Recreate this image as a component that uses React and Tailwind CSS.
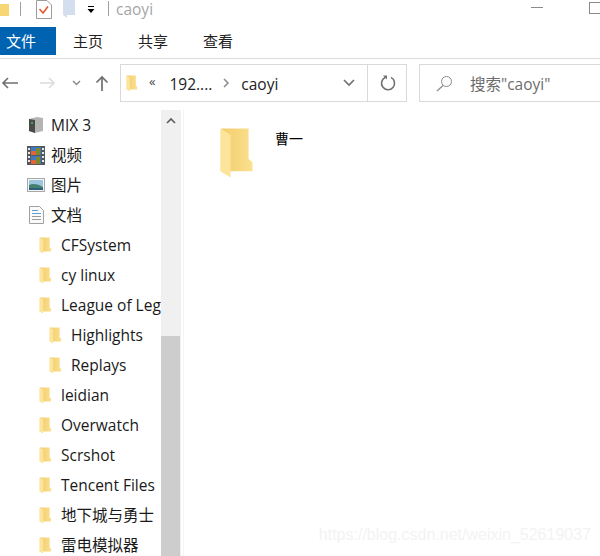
import React from "react";

const FONT = '"Open Sans", "Noto Sans CJK SC", sans-serif';

function Folder({ w = 13, h = 17, id = "f" }) {
  return (
    <svg width={w} height={h} viewBox="0 0 14 17" preserveAspectRatio="none" className="shrink-0 block">
      <defs>
        <linearGradient id={id} x1="0" y1="0" x2="1" y2="0">
          <stop offset="0" stopColor="#f2cd6c" />
          <stop offset="1" stopColor="#fbe08f" />
        </linearGradient>
      </defs>
      <path d="M1 0.5H11.5V10.5L13 11.5V14.5H1Z" fill={`url(#${id})`} />
      <path d="M0.5 0.5L4.5 2.5V16.5L0.5 14.5Z" fill="#fde49b" />
    </svg>
  );
}

function Row({ children, icon, indent = "pl-[39px]", gap = "gap-[10px]" }) {
  return (
    <div className={`h-[30px] flex items-center whitespace-nowrap overflow-hidden ${indent} ${gap}`}>
      {icon}
      <span className="text-[15.5px] leading-[22px] text-[#1a1a1a]">{children}</span>
    </div>
  );
}

const Drive = () => (
  <svg width="16" height="18" viewBox="0 0 16 18" className="shrink-0 block">
    <path d="M1 3L9 1L15 2V15L7 17L1 15Z" fill="#b4b4b4" />
    <path d="M1 3L7 4V17L1 15Z" fill="#4a4a4a" />
    <rect x="3" y="6" width="2" height="2" fill="#34b04a" />
  </svg>
);
const Film = () => (
  <svg width="18" height="19" viewBox="0 0 18 19" className="shrink-0 block">
    <rect width="18" height="19" fill="#55585c" />
    <rect x="4" y="1" width="10" height="8" fill="#3f78c4" />
    <rect x="4" y="10" width="10" height="8" fill="#3f78c4" />
    <rect x="4" y="5" width="5" height="4" fill="#e2653a" />
    <rect x="9" y="2" width="4" height="7" fill="#7c8a2c" />
    <rect x="4" y="14" width="5" height="4" fill="#e2653a" />
    <rect x="9" y="11" width="4" height="7" fill="#7c8a2c" />
    <g fill="#e8e8e8">
      <rect x="1" y="2" width="2" height="2" />
      <rect x="1" y="6" width="2" height="2" />
      <rect x="1" y="10" width="2" height="2" />
      <rect x="1" y="14" width="2" height="2" />
      <rect x="15" y="2" width="2" height="2" />
      <rect x="15" y="6" width="2" height="2" />
      <rect x="15" y="10" width="2" height="2" />
      <rect x="15" y="14" width="2" height="2" />
    </g>
  </svg>
);
const Pic = () => (
  <svg width="18" height="14" viewBox="0 0 18 14" className="shrink-0 block">
    <rect x="0.5" y="0.5" width="17" height="13" fill="#f4f4f4" stroke="#a8a8a8" />
    <rect x="2" y="2" width="14" height="10" fill="#9cc6de" />
    <path d="M2 7C6 5 11 6 16 9V12H2Z" fill="#44806f" />
    <rect x="2" y="10" width="14" height="2" fill="#2d5f7a" />
  </svg>
);
const Doc = () => (
  <svg width="15" height="18" viewBox="0 0 15 18" className="shrink-0 block">
    <path d="M0.5 0.5H10.5L14.5 4.5V17.5H0.5Z" fill="#fafafa" stroke="#a0a0a0" />
    <g stroke="#5aa0d8">
      <path d="M3 4.5H9" />
      <path d="M3 7.5H12" />
    </g>
    <g stroke="#9a9a9a">
      <path d="M3 10.5H12" />
      <path d="M3 13.5H12" />
    </g>
  </svg>
);

export default function App() {
  const f = (name, i, sub) => (
    <Row
      key={name}
      indent={sub ? "pl-[49px]" : "pl-[39px]"}
      gap="gap-[9px]"
      icon={<Folder id={`side${i}`} />}
    >
      {name}
    </Row>
  );
  return (
    <div className="relative w-[600px] h-[556px] bg-white overflow-hidden" style={{ fontFamily: FONT }}>
      {/* title bar */}
      <div className="h-[27px] flex items-start relative">
        <div className="w-[9px] h-[12px] bg-[#f8d676] mt-[4px]" />
        <div className="w-px h-[14px] bg-[#a0a0a0] ml-[11px] mt-[2px]" />
        <svg width="16" height="19" viewBox="0 0 16 19" className="ml-[15px] block">
          <path d="M0.5 0.5H11L15.5 5V18.5H0.5Z" fill="#fff" stroke="#9c9c9c" />
          <path d="M3.5 9L7 13L12 6.5" fill="none" stroke="#e4572e" strokeWidth="1.6" />
        </svg>
        <svg width="13" height="18" viewBox="0 0 13 18" className="ml-[11px] block">
          <path d="M0 0H12V14L13 15H4V18L0 15Z" fill="#d3dfee" />
        </svg>
        <svg width="8" height="8" viewBox="0 0 8 8" className="ml-[11px] mt-[6px] block">
          <rect x="1" y="0" width="6" height="1" fill="#000" />
          <path d="M0.5 3H7.5L4 7Z" fill="#000" />
        </svg>
        <div className="w-px h-[15px] bg-[#a0a0a0] ml-[13px] mt-[1px]" />
        <span className="ml-[7px] text-[15.5px] leading-[19px] text-[#a5a5a5]">caoyi</span>
        <div className="absolute left-[531px] top-[7px] w-[12px] h-px bg-[#8a8a8a]" />
        <div className="absolute left-[589px] top-[2px] w-[14px] h-[12px] border border-[#8a8a8a]" />
      </div>

      {/* tabs */}
      <div className="h-[32px] border-b border-[#dcdcdc] flex items-start text-[15px]">
        <div className="w-[56px] h-[28px] bg-[#0063b1] text-white flex items-center pl-[6px]">文件</div>
        <div className="h-[28px] flex items-center ml-[17px] text-[#222]">主页</div>
        <div className="h-[28px] flex items-center ml-[35px] text-[#222]">共享</div>
        <div className="h-[28px] flex items-center ml-[35px] text-[#222]">查看</div>
      </div>

      {/* address bar */}
      <div className="h-[51px] flex items-start pt-[5px]">
        <div className="w-[120px] shrink-0 h-[38px] flex items-center">
          <svg width="18" height="14" viewBox="0 0 18 14" className="ml-[1px] block">
            <path d="M17 7H2M7 2L2 7L7 12" fill="none" stroke="#6f6f6f" strokeWidth="1.6" />
          </svg>
          <svg width="16" height="14" viewBox="0 0 16 14" className="ml-[21px] block">
            <path d="M0 7H14M9 2L14 7L9 12" fill="none" stroke="#dcdcdc" strokeWidth="1.6" />
          </svg>
          <svg width="9" height="6" viewBox="0 0 9 6" className="ml-[16px] block">
            <path d="M1 1L4.5 4.5L8 1" fill="none" stroke="#8a8a8a" strokeWidth="1.5" />
          </svg>
          <svg width="14" height="16" viewBox="0 0 14 16" className="ml-[14px] block">
            <path d="M7 16V2M1.5 7.5L7 2L12.5 7.5" fill="none" stroke="#6f6f6f" strokeWidth="1.7" />
          </svg>
        </div>
        <div className="w-[287px] shrink-0 h-[38px] border border-[#d9d9d9] flex items-center text-[#222] text-[15.5px]">
          <div className="ml-[5px]"><Folder w={12} h={17} id="addr" /></div>
          <span className="ml-[11px] text-[13px] text-[#444] mb-[3px]">«</span>
          <span className="ml-[14px] leading-[22px] pt-[2px]">192....</span>
          <svg width="7" height="10" viewBox="0 0 7 10" className="ml-[11px] block shrink-0">
            <path d="M1 1L5 5L1 9" fill="none" stroke="#8a8a8a" strokeWidth="1.5" />
          </svg>
          <span className="ml-[11px] leading-[22px] pt-[2px]">caoyi</span>
          <svg width="12" height="8" viewBox="0 0 12 8" className="ml-[65px] block shrink-0">
            <path d="M1 1L6 6L11 1" fill="none" stroke="#707070" strokeWidth="1.6" />
          </svg>
          <div className="w-px h-[36px] bg-[#d9d9d9] ml-[12px] shrink-0" />
          <svg width="16" height="16" viewBox="0 0 16 16" className="ml-[12px] block shrink-0">
            <path d="M5.5 2.2A6.5 6.5 0 1 0 11 2.4" fill="none" stroke="#707070" strokeWidth="1.6" />
            <path d="M3 0.5H7V4.5Z" fill="#707070" />
          </svg>
        </div>
        <div className="ml-[12px] w-[190px] shrink-0 h-[38px] border border-[#d9d9d9] flex items-center">
          <svg width="17" height="17" viewBox="0 0 17 17" className="ml-[16px] block">
            <circle cx="10.5" cy="6.5" r="5" fill="none" stroke="#8a8a8a" />
            <path d="M7 10.5L1 16" stroke="#8a8a8a" strokeWidth="1.2" />
          </svg>
          <span className="ml-[17px] text-[15.5px] leading-[22px] pt-[2px] text-[#6d6d6d]">搜索"caoyi"</span>
        </div>
      </div>

      {/* body */}
      <div className="flex h-[446px]">
        <div className="w-[161px] shrink-0 overflow-hidden">
          <Row indent="pl-[28px]" gap="gap-[7px]" icon={<Drive />}>MIX 3</Row>
          <Row indent="pl-[27px]" gap="gap-[6px]" icon={<Film />}>视频</Row>
          <Row indent="pl-[27px]" gap="gap-[6px]" icon={<Pic />}>图片</Row>
          <Row indent="pl-[29px]" gap="gap-[7px]" icon={<Doc />}>文档</Row>
          {f("CFSystem", 0)}
          {f("cy linux", 1)}
          {f("League of Legends", 2)}
          {f("Highlights", 3, true)}
          {f("Replays", 4, true)}
          {f("leidian", 5)}
          {f("Overwatch", 6)}
          {f("Scrshot", 7)}
          {f("Tencent Files", 8)}
          {f("地下城与勇士", 9)}
          {f("雷电模拟器", 10)}
        </div>
        <div className="w-[20px] shrink-0 bg-[#f0f0f0] flex flex-col">
          <div className="h-[226px] flex justify-center pt-[7px]">
            <svg width="10" height="7" viewBox="0 0 10 7" className="block">
              <path d="M1 6L5 2L9 6" fill="none" stroke="#606060" strokeWidth="1.7" />
            </svg>
          </div>
          <div className="flex-1 bg-[#cdcdcd] mr-px" />
        </div>
        <div className="w-px ml-[2px] bg-[#f5f5f5]" />
        <div className="flex items-start pl-[35px] pt-[17px]">
          <Folder w={36} h={52} id="main" />
          <span className="ml-[20px] mt-[1px] text-[14px] text-black">曹一</span>
        </div>
      </div>

      <div className="absolute right-[9px] bottom-[9px] text-[16px] text-[#f3f3f3]" style={{ fontFamily: '"Liberation Sans", sans-serif' }}>
        https://blog.csdn.net/weixin_52619037
      </div>
    </div>
  );
}
